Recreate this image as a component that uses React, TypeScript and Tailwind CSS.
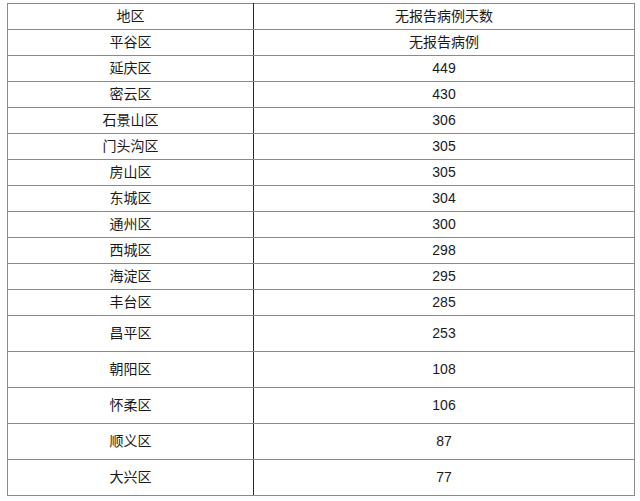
import React from 'react';

const rows: [string, string][] = [
  ['平谷区', '无报告病例'],
  ['延庆区', '449'],
  ['密云区', '430'],
  ['石景山区', '306'],
  ['门头沟区', '305'],
  ['房山区', '305'],
  ['东城区', '304'],
  ['通州区', '300'],
  ['西城区', '298'],
  ['海淀区', '295'],
  ['丰台区', '285'],
  ['昌平区', '253'],
  ['朝阳区', '108'],
  ['怀柔区', '106'],
  ['顺义区', '87'],
  ['大兴区', '77'],
];

export default function App() {
  return (
    <main className="w-[640px] h-[501px] bg-white overflow-hidden">
      <table
        className="ml-[7px] mt-[3px] w-[628px] border-collapse border border-[#8a8a8a] text-[14px] text-[#1a1a1a] text-center"
        style={{ fontFamily: '"Liberation Sans", "Noto Sans CJK SC", sans-serif' }}
      >
        <tbody>
          <tr className="h-[26px]">
            <td className="w-[246px] border border-[#8a8a8a] border-r-[#2a2a2a] p-0">地区</td>
            <td className="border border-[#8a8a8a] p-0">无报告病例天数</td>
          </tr>
          {rows.map(([name, days], i) => (
            <tr key={name} className={i < 11 ? 'h-[26px]' : 'h-[36px]'}>
              <td className="border border-[#8a8a8a] border-r-[#2a2a2a] p-0">{name}</td>
              <td className="border border-[#8a8a8a] p-0">{days}</td>
            </tr>
          ))}
        </tbody>
      </table>
    </main>
  );
}
